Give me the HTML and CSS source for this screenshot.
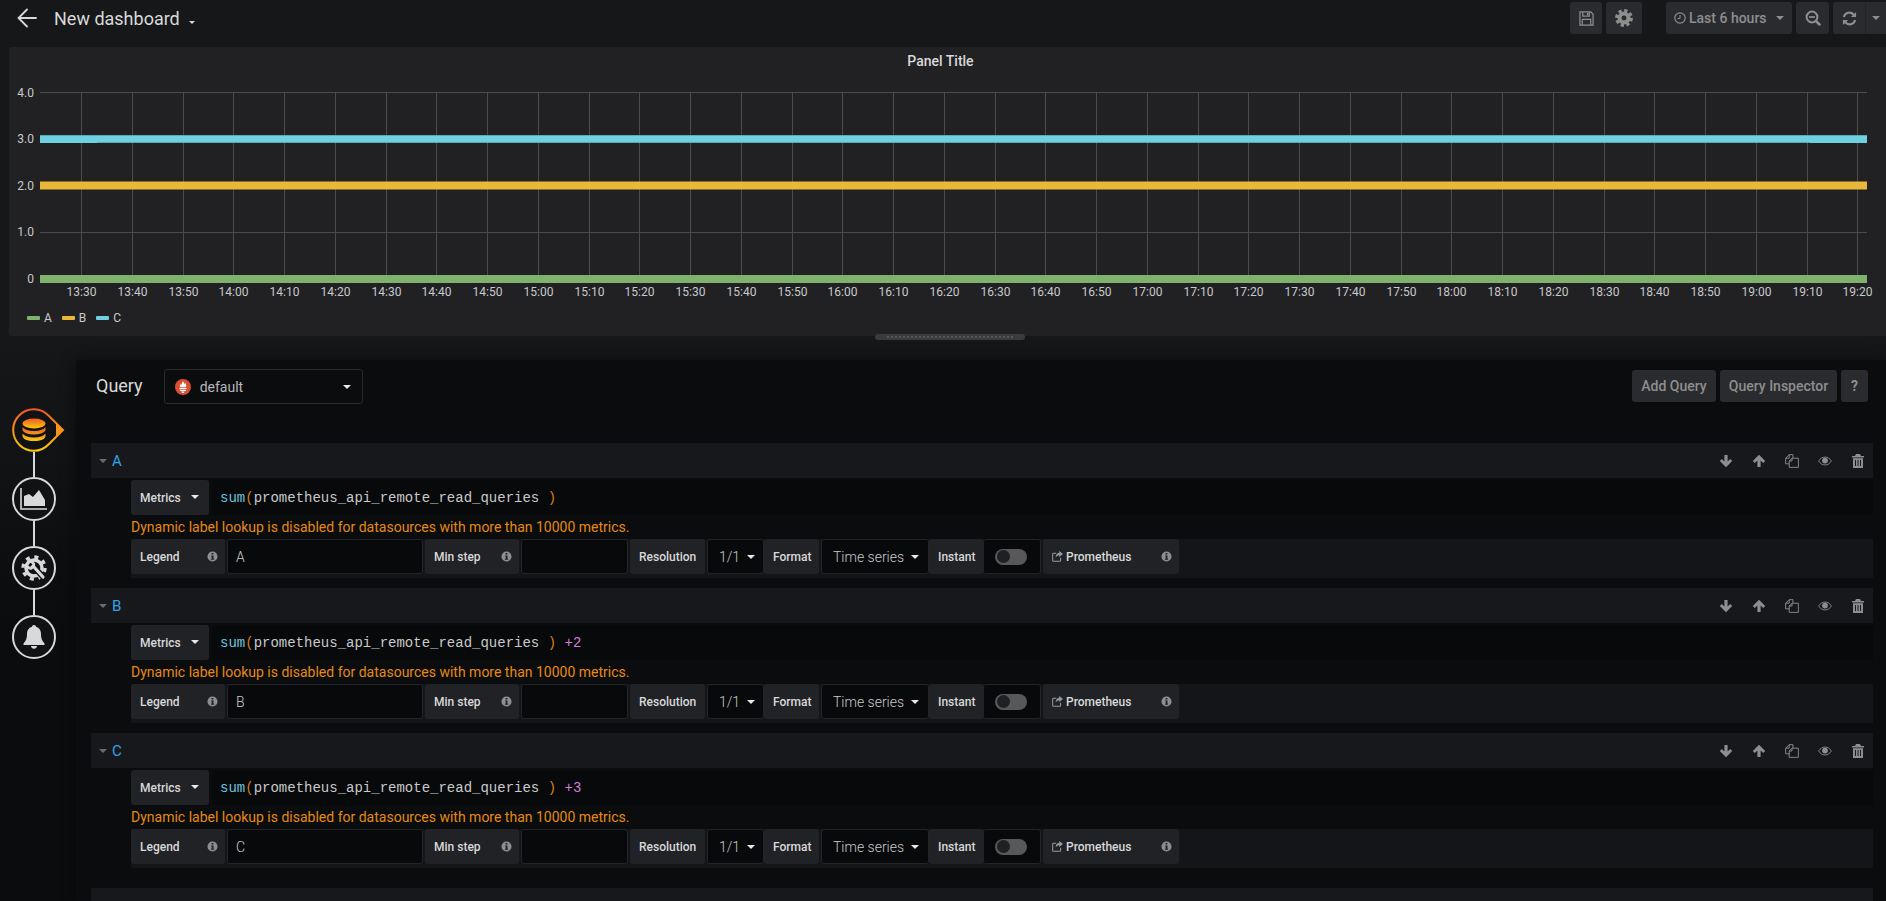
FILE: index.html
```html
<!DOCTYPE html>
<html lang="en">
<head>
<meta charset="utf-8">
<title>New dashboard</title>
<link rel="stylesheet" href="styles.css">
</head>
<body>
<svg class="defs" width="0" height="0" aria-hidden="true">
  <defs>
    <linearGradient id="orange" x1="0" y1="0" x2="0" y2="1"><stop offset="0" stop-color="#f05a28"/><stop offset="1" stop-color="#fbca0a"/></linearGradient>
    <symbol id="i-info" viewBox="0 0 12 12"><path fill="currentColor" fill-rule="evenodd" d="M6 .5a5.500 5.500 0 1 0 0 11 5.500 5.500 0 0 0 0-11zM5 2.200h2v1.700H5zM4.400 4.800h2.700v3.700h.7v1H4.300v-1h.8V5.800h-.7z"/></symbol>
    <symbol id="i-down" viewBox="0 0 14 14"><path fill="currentColor" d="M7 13.200.8 7l2-2 2.600 2.600V1h3.200v6.600L11.200 5l2 2z"/></symbol>
    <symbol id="i-up" viewBox="0 0 14 14"><path fill="currentColor" d="M7 .8 13.200 7l-2 2-2.600-2.600V13H5.400V6.400L2.800 9l-2-2z"/></symbol>
    <symbol id="i-copy" viewBox="0 0 15 15"><path fill="none" stroke="currentColor" d="M4.500 10.500H.7V4.500L4.500.7h4v3.500M8.500 4.500h-1l-3 3v6.800h9.800V4.500zM4.500.7v3.800H.7M7.500 4.500v3h-3"/></symbol>
    <symbol id="i-eye" viewBox="0 0 16 12"><path fill="none" stroke="currentColor" d="M.7 6C2.500 3 5 1.500 8 1.500S13.500 3 15.300 6C13.500 9 11 10.500 8 10.500S2.500 9 .7 6z"/><circle cx="8" cy="5.500" r="3.300" fill="currentColor"/></symbol>
    <symbol id="i-trash" viewBox="0 0 12 14"><path fill="currentColor" fill-rule="evenodd" d="M4 0h4l1 2h3v1.500H0V2h3zM1 4.300h10V14H1zM3 6v6h1V6zM5.500 6v6h1V6zM8 6v6h1V6z"/></symbol>
    <symbol id="i-link" viewBox="0 0 13 13"><path fill="none" stroke="currentColor" stroke-width="1.200" d="M5 2.600H1.800a1 1 0 0 0-1 1v7.600a1 1 0 0 0 1 1h7.400a1 1 0 0 0 1-1V8"/><path fill="currentColor" d="M8.500 0 13 3.500 8.500 7V5C6.500 5 5 6 4.500 8 4 4.500 6 2.500 8.500 2.200z"/></symbol>
    <symbol id="i-save" viewBox="0 0 16 16"><path fill="none" stroke="currentColor" stroke-width="1.300" d="M1 1h11.500L15 3.500V15H1z"/><path fill="none" stroke="currentColor" stroke-width="1.300" d="M4 1v4.500h7V1M3.500 15V9h9v6"/><rect x="8.500" y="2" width="1.500" height="2.500" fill="currentColor"/></symbol>
    <symbol id="i-cog" viewBox="0 0 20 20"><circle cx="10" cy="10" r="5" fill="none" stroke="currentColor" stroke-width="4.500"/><circle cx="10" cy="10" r="8.200" fill="none" stroke="currentColor" stroke-width="3.400" stroke-dasharray="3.600 2.840"/></symbol>
    <symbol id="i-clock" viewBox="0 0 12 12"><circle cx="6" cy="6" r="5.200" fill="none" stroke="currentColor" stroke-width="1.200"/><path fill="none" stroke="currentColor" d="M6 3v3.500H3.500"/></symbol>
    <symbol id="i-zoom" viewBox="0 0 16 16"><circle cx="7" cy="7" r="5.400" fill="none" stroke="currentColor" stroke-width="2"/><path stroke="currentColor" stroke-width="2.500" stroke-linecap="round" d="m11 11 3.500 3.500"/><path stroke="currentColor" stroke-width="1.700" d="M4 7h6"/></symbol>
    <symbol id="i-refresh" viewBox="0 0 16 16"><path fill="none" stroke="currentColor" stroke-width="2.200" d="M2 6.500A6 6 0 0 1 12.500 4M14 9.500A6 6 0 0 1 3.500 12"/><path fill="currentColor" d="M15 1v5.500H9.500zM1 15V9.500h5.500z"/></symbol>
    <symbol id="i-prom" viewBox="0 0 16 16"><circle cx="8" cy="8" r="8" fill="#da4e31"/><path fill="#fff" d="M8 2c.5 1.500 1.300 1.800 1 3 .7-.2.900-.7 1-1.200.8 1 1.400 2.200 1.200 3.700l-.2.800H5c-.5-1.500.3-3 1-3.800 0 .7.300 1.200.8 1.400C6.500 4.500 7.500 3.500 8 2zM4.500 9h7v1.200h-7zM5 11h6v1H5zM6.500 12.500h3a1.500 1.500 0 0 1-3 0z"/></symbol>
    <symbol id="i-back" viewBox="0 0 20 20"><path fill="none" stroke="currentColor" stroke-width="1.800" stroke-linecap="round" d="M19 10H2M10 1.500 1.500 10l8.500 8.500"/></symbol>
  </defs>
</svg>

<header class="topbar">
  <svg class="back"><use href="#i-back"/></svg>
  <h1 class="dash-title">New dashboard</h1>
  <span class="caret caret-title"></span>
  <div class="top-actions">
    <button class="tbtn tbtn-save"><svg class="ti ti-save"><use href="#i-save"/></svg></button>
    <button class="tbtn tbtn-cog"><svg class="ti ti-cog"><use href="#i-cog"/></svg></button>
    <button class="tbtn tbtn-time"><svg class="ti ti-clock"><use href="#i-clock"/></svg><span>Last 6 hours</span><span class="caret caret-grey"></span></button>
    <button class="tbtn tbtn-zoom"><svg class="ti ti-zoom"><use href="#i-zoom"/></svg></button>
    <div class="refresh-group">
      <button class="tbtn tbtn-refresh"><svg class="ti ti-refresh"><use href="#i-refresh"/></svg></button>
      <button class="tbtn tbtn-more"><span class="caret caret-grey"></span></button>
    </div>
  </div>
</header>

<section class="panel">
  <div class="panel-title">Panel Title</div>
  <svg class="chart" viewBox="9 70 1877 236" width="1877" height="236">
    <g class="grid">
      <path d="M40 92.500H1867M40 139.500H1867M40 186.500H1867M40 232.500H1867"/>
      <path d="M81.500 92V279M132.500 92V279M183.500 92V279M233.500 92V279M284.500 92V279M335.500 92V279M386.500 92V279M436.500 92V279M487.500 92V279M538.500 92V279M589.500 92V279M639.500 92V279M690.500 92V279M741.500 92V279M792.500 92V279M842.500 92V279M893.500 92V279M944.500 92V279M995.500 92V279M1045.500 92V279M1096.500 92V279M1147.500 92V279M1198.500 92V279M1248.500 92V279M1299.500 92V279M1350.500 92V279M1401.500 92V279M1451.500 92V279M1502.500 92V279M1553.500 92V279M1604.500 92V279M1654.500 92V279M1705.500 92V279M1756.500 92V279M1807.500 92V279M1857.500 92V279"/>
    </g>
    <rect class="s-c" x="40" y="135" width="1827" height="8"/>
    <path class="s-c-edge" d="M40 135.500H1867M97 142.500H1810"/>
    <rect class="s-b" x="40" y="181.500" width="1827" height="8"/>
    <rect class="s-a" x="40" y="275" width="1827" height="8"/>
    <g class="ylab">
      <text x="34" y="96.500">4.0</text><text x="34" y="142.500">3.0</text><text x="34" y="189.500">2.0</text><text x="34" y="236">1.0</text><text x="34" y="283">0</text>
    </g>
    <g class="xlab">
      <text x="81.500" y="296">13:30</text><text x="132.500" y="296">13:40</text><text x="183.500" y="296">13:50</text><text x="233.500" y="296">14:00</text><text x="284.500" y="296">14:10</text><text x="335.500" y="296">14:20</text><text x="386.500" y="296">14:30</text><text x="436.500" y="296">14:40</text><text x="487.500" y="296">14:50</text><text x="538.500" y="296">15:00</text><text x="589.500" y="296">15:10</text><text x="639.500" y="296">15:20</text><text x="690.500" y="296">15:30</text><text x="741.500" y="296">15:40</text><text x="792.500" y="296">15:50</text><text x="842.500" y="296">16:00</text><text x="893.500" y="296">16:10</text><text x="944.500" y="296">16:20</text><text x="995.500" y="296">16:30</text><text x="1045.500" y="296">16:40</text><text x="1096.500" y="296">16:50</text><text x="1147.500" y="296">17:00</text><text x="1198.500" y="296">17:10</text><text x="1248.500" y="296">17:20</text><text x="1299.500" y="296">17:30</text><text x="1350.500" y="296">17:40</text><text x="1401.500" y="296">17:50</text><text x="1451.500" y="296">18:00</text><text x="1502.500" y="296">18:10</text><text x="1553.500" y="296">18:20</text><text x="1604.500" y="296">18:30</text><text x="1654.500" y="296">18:40</text><text x="1705.500" y="296">18:50</text><text x="1756.500" y="296">19:00</text><text x="1807.500" y="296">19:10</text><text x="1857.500" y="296">19:20</text>
    </g>
  </svg>
  <div class="legend">
    <span class="leg"><i class="sw sw-a"></i>A</span>
    <span class="leg"><i class="sw sw-b"></i>B</span>
    <span class="leg"><i class="sw sw-c"></i>C</span>
  </div>
  <div class="handle"></div>
</section>

<div class="lower">
  <nav class="steps">
    <div class="step step-active">
      <svg class="step-svg" viewBox="0 0 54 44" width="54" height="44">
        <path d="M22 1.200C28 1.200 33 3.800 37 8L51 22 37 36C33 40.200 28 42.800 22 42.800A20.800 20.800 0 0 1 22 1.200Z" fill="#111214" stroke="url(#orange)" stroke-width="2"/>
        <path d="M44 15 51.500 22 44 29.500z" fill="#f7941d"/>
        <g fill="url(#orange)"><ellipse cx="22" cy="15.500" rx="11.500" ry="5"/><path d="M10.500 19c2 2.500 6 4 11.500 4s9.500-1.500 11.500-4v3.500c-2 2.500-6 4-11.500 4s-9.500-1.500-11.500-4zM10.500 25.500c2 2.500 6 4 11.500 4s9.500-1.500 11.500-4v2.500c0 3-5 5-11.500 5s-11.500-2-11.500-5z"/></g>
      </svg>
    </div>
    <i class="link"></i>
    <div class="step">
      <svg viewBox="0 0 28 24" width="28" height="24"><path fill="none" stroke="#d8d9da" stroke-width="1.600" d="M1 1v21h26"/><path fill="#d8d9da" d="M4 19V9l5-2 4 3 6-7 6 10v6z"/></svg>
    </div>
    <i class="link"></i>
    <div class="step">
      <svg viewBox="0 0 26 26" width="26" height="26"><circle cx="13" cy="13" r="8" fill="none" stroke="#d8d9da" stroke-width="3.500"/><circle cx="13" cy="13" r="11" fill="none" stroke="#d8d9da" stroke-width="3.400" stroke-dasharray="4 4.640"/><path fill="none" stroke="#111214" stroke-width="6" d="m12 11 11 12"/><path fill="none" stroke="#d8d9da" stroke-width="3.200" stroke-linecap="round" d="m13 12 9 10"/><path fill="#d8d9da" d="M6 7c2-2 5-2 7 0 1.500 1.500 1.500 3.500.5 5L11 14.500C9 15 7 14.500 6 13c-1-1.500-1-3-.5-4.500L9 12l2.500-2.500L8 6z"/></svg>
    </div>
    <i class="link"></i>
    <div class="step">
      <svg viewBox="0 0 22 24" width="22" height="24"><path fill="#d8d9da" d="M11 0c1.200 0 2 .8 2 1.700 3.500 1 5 4 5 7.300 0 4 .8 6.500 3.500 9.500v1.500H.5v-1.500C3.200 15.500 4 13 4 9c0-3.300 1.500-6.300 5-7.300C9 .8 9.800 0 11 0zM8 21h6c0 1.500-1.300 2.700-3 2.700S8 22.500 8 21z"/></svg>
    </div>
  </nav>

  <main class="editor">
    <div class="editor-head">
      <h2 class="editor-title">Query</h2>
      <div class="ds-select"><svg class="ds-icon"><use href="#i-prom"/></svg><span class="ds-name">default</span><span class="caret caret-ds"></span></div>
      <div class="editor-actions">
        <button class="ebtn ebtn-add">Add Query</button>
        <button class="ebtn ebtn-insp">Query Inspector</button>
        <button class="ebtn ebtn-help">?</button>
      </div>
    </div>

    <div class="qrow">
      <div class="qhead">
        <span class="caret caret-row"></span><span class="qname">A</span>
        <div class="qtools"><svg class="qi"><use href="#i-down"/></svg><svg class="qi"><use href="#i-up"/></svg><svg class="qi"><use href="#i-copy"/></svg><svg class="qi"><use href="#i-eye"/></svg><svg class="qi"><use href="#i-trash"/></svg></div>
      </div>
      <div class="qbody">
        <div class="expr-line"><div class="metrics">Metrics<span class="caret caret-metrics"></span></div><div class="expr"><span class="fn">sum</span><span class="par">(</span>prometheus_api_remote_read_queries <span class="par">)</span></div></div>
        <div class="warn">Dynamic label lookup is disabled for datasources with more than 10000 metrics.</div>
        <div class="opts">
          <div class="lbl lbl-legend">Legend<svg class="info"><use href="#i-info"/></svg></div><div class="inp inp-legend">A</div>
          <div class="lbl lbl-step">Min step<svg class="info"><use href="#i-info"/></svg></div><div class="inp inp-step"></div>
          <div class="lbl lbl-res">Resolution</div><div class="inp inp-ratio">1/1<span class="caret caret-opt"></span></div>
          <div class="lbl lbl-fmt">Format</div><div class="inp inp-fmt">Time series<span class="caret caret-opt"></span></div>
          <div class="lbl lbl-inst">Instant</div><div class="inp inp-toggle"><span class="toggle"><span class="knob"></span></span></div>
          <div class="lbl lbl-prom"><svg class="plink"><use href="#i-link"/></svg>Prometheus<svg class="info"><use href="#i-info"/></svg></div>
        </div>
      </div>
    </div>

    <div class="qrow">
      <div class="qhead">
        <span class="caret caret-row"></span><span class="qname">B</span>
        <div class="qtools"><svg class="qi"><use href="#i-down"/></svg><svg class="qi"><use href="#i-up"/></svg><svg class="qi"><use href="#i-copy"/></svg><svg class="qi"><use href="#i-eye"/></svg><svg class="qi"><use href="#i-trash"/></svg></div>
      </div>
      <div class="qbody">
        <div class="expr-line"><div class="metrics">Metrics<span class="caret caret-metrics"></span></div><div class="expr"><span class="fn">sum</span><span class="par">(</span>prometheus_api_remote_read_queries <span class="par">)</span> <span class="op">+2</span></div></div>
        <div class="warn">Dynamic label lookup is disabled for datasources with more than 10000 metrics.</div>
        <div class="opts">
          <div class="lbl lbl-legend">Legend<svg class="info"><use href="#i-info"/></svg></div><div class="inp inp-legend">B</div>
          <div class="lbl lbl-step">Min step<svg class="info"><use href="#i-info"/></svg></div><div class="inp inp-step"></div>
          <div class="lbl lbl-res">Resolution</div><div class="inp inp-ratio">1/1<span class="caret caret-opt"></span></div>
          <div class="lbl lbl-fmt">Format</div><div class="inp inp-fmt">Time series<span class="caret caret-opt"></span></div>
          <div class="lbl lbl-inst">Instant</div><div class="inp inp-toggle"><span class="toggle"><span class="knob"></span></span></div>
          <div class="lbl lbl-prom"><svg class="plink"><use href="#i-link"/></svg>Prometheus<svg class="info"><use href="#i-info"/></svg></div>
        </div>
      </div>
    </div>

    <div class="qrow">
      <div class="qhead">
        <span class="caret caret-row"></span><span class="qname">C</span>
        <div class="qtools"><svg class="qi"><use href="#i-down"/></svg><svg class="qi"><use href="#i-up"/></svg><svg class="qi"><use href="#i-copy"/></svg><svg class="qi"><use href="#i-eye"/></svg><svg class="qi"><use href="#i-trash"/></svg></div>
      </div>
      <div class="qbody">
        <div class="expr-line"><div class="metrics">Metrics<span class="caret caret-metrics"></span></div><div class="expr"><span class="fn">sum</span><span class="par">(</span>prometheus_api_remote_read_queries <span class="par">)</span> <span class="op">+3</span></div></div>
        <div class="warn">Dynamic label lookup is disabled for datasources with more than 10000 metrics.</div>
        <div class="opts">
          <div class="lbl lbl-legend">Legend<svg class="info"><use href="#i-info"/></svg></div><div class="inp inp-legend">C</div>
          <div class="lbl lbl-step">Min step<svg class="info"><use href="#i-info"/></svg></div><div class="inp inp-step"></div>
          <div class="lbl lbl-res">Resolution</div><div class="inp inp-ratio">1/1<span class="caret caret-opt"></span></div>
          <div class="lbl lbl-fmt">Format</div><div class="inp inp-fmt">Time series<span class="caret caret-opt"></span></div>
          <div class="lbl lbl-inst">Instant</div><div class="inp inp-toggle"><span class="toggle"><span class="knob"></span></span></div>
          <div class="lbl lbl-prom"><svg class="plink"><use href="#i-link"/></svg>Prometheus<svg class="info"><use href="#i-info"/></svg></div>
        </div>
      </div>
    </div>

    <div class="qhead qhead-last"></div>
  </main>
</div>
</body>
</html>
```
FILE: styles.css
```css
* { box-sizing: border-box; }
html, body { margin: 0; height: 901px; overflow: hidden; }
body {
  width: 1886px;
  background: linear-gradient(180deg, #161719 0, #161719 340px, #0b0c0e 620px);
  color: #d8d9da;
  font-family: Roboto, "Liberation Sans", sans-serif;
  font-size: 14px;
}
.defs { position: absolute; }
button { font-family: inherit; border: 0; padding: 0; margin: 0; }

.caret { display: block; width: 0; height: 0; border-style: solid; border-color: #d8d9da transparent transparent; }

/* top bar */
.topbar { height: 47px; display: flex; align-items: flex-start; padding-left: 17px; }
.back { width: 20px; height: 20px; margin-top: 8px; color: #d8d9da; }
.dash-title { margin: 5px 0 0 17px; font-size: 18px; font-weight: 400; line-height: 28px; color: #d8d9da; }
.caret-title { margin: 21px 0 0 9px; border-width: 3px 3px 0; }
.top-actions { margin-left: auto; display: flex; gap: 4px; padding-top: 2px; align-items: flex-start; }
.tbtn { height: 32px; display: flex; align-items: center; justify-content: center; background: #2a2b2e; border-radius: 3px; color: #8e8e8e; font-size: 14px; font-weight: 500; }
.tbtn-save { width: 32px; }
.tbtn-cog { width: 36px; margin-right: 20px; }
.tbtn-time { width: 126px; justify-content: flex-start; padding-left: 8px; }
.tbtn-zoom { width: 33px; }
.refresh-group { display: flex; width: 53px; }
.tbtn-refresh { width: 32px; border-radius: 3px 0 0 3px; }
.tbtn-more { width: 21px; border-radius: 0; border-left: 1px solid #232427; }
.ti { display: block; }
.ti-save { width: 15px; height: 15px; }
.ti-cog { width: 18px; height: 18px; }
.ti-clock { width: 12px; height: 12px; margin-right: 3px; }
.ti-zoom { width: 16px; height: 16px; }
.ti-refresh { width: 15px; height: 15px; }
.caret-grey { border-width: 4px 4px 0; border-top-color: #8e8e8e; }
.tbtn-time .caret-grey { margin-left: 9px; }

/* graph panel */
.panel { position: relative; height: 289px; margin-left: 9px; width: 1877px; background: #212124; border-radius: 3px 0 0 3px; }
.panel-title { height: 23px; padding: 6px 14px 0 0; line-height: 17px; font-size: 14px; font-weight: 500; text-align: center; color: #d8d9da; }
.chart { display: block; }
.grid path { stroke: #4c4c4e; stroke-width: 1; fill: none; }
.s-c { fill: #6ed0e0; }
.s-c-edge { stroke: #5aa9b8; stroke-width: 1; fill: none; }
.s-b { fill: #eab839; }
.s-a { fill: #7eb26d; }
.ylab text { text-anchor: end; fill: #c8c9ca; font: 400 12px Roboto, sans-serif; }
.xlab text { text-anchor: middle; fill: #c8c9ca; font: 400 12px Roboto, sans-serif; }
.legend { height: 30px; display: flex; gap: 10px; padding: 4px 0 0 18px; align-items: flex-start; }
.leg { display: flex; align-items: center; font-size: 12px; line-height: 16px; color: #c8c9ca; }
.sw { display: block; width: 13px; height: 4px; margin-right: 4px; border-radius: 1px; }
.sw-a { background: #7eb26d; }
.sw-b { background: #eab839; }
.sw-c { background: #6ed0e0; }
.handle {
  position: absolute; left: 866px; bottom: -4px; width: 150px; height: 6px; border-radius: 3px;
  background-image: repeating-linear-gradient(90deg, #3b3b3f 0, #3b3b3f 2px, #58585c 2px, #58585c 4px);
  background-size: 130px 2px; background-position: center; background-repeat: no-repeat;
  background-color: #3b3b3f;
}

/* lower area */
.lower { display: flex; height: 565px; padding-top: 24px; }
.steps { width: 76px; padding: 48px 0 0 12px; flex: none; display: flex; flex-direction: column; align-items: flex-start; }
.step { width: 44px; height: 44px; border-radius: 50%; border: 2px solid #d8d9da; display: flex; align-items: center; justify-content: center; background: #111214; flex: none; }
.step-active { border: 0; background: none; width: 54px; display: block; border-radius: 0; }
.step-svg { display: block; }
.link { display: block; width: 2px; height: 25px; margin-left: 21px; background: #d8d9da; flex: none; }

.editor { flex: 1; background: #0b0c0e; border-radius: 4px 0 0 0; padding: 0 13px 0 15px; box-shadow: 0 0 16px rgba(0,0,0,.45); min-width: 0; }
.editor-head { height: 83px; display: flex; align-items: flex-start; }
.editor-title { margin: 8px 0 0 5px; font-size: 18px; font-weight: 400; line-height: 36px; color: #d8d9da; }
.ds-select { margin: 9px 0 0 21px; width: 199px; height: 35px; display: flex; align-items: center; padding: 0 6px 0 10px; background: #0b0c0e; border: 1px solid #2a2a2d; border-radius: 3px; }
.ds-icon { width: 16px; height: 16px; }
.ds-name { margin-left: 9px; color: #b7b8bb; font-size: 14px; }
.caret-ds { margin-left: auto; margin-right: 5px; border-width: 4px 4px 0; border-top-color: #e8e8e8; }
.editor-actions { margin-left: auto; display: flex; gap: 4px; padding: 10px 5px 0 0; }
.ebtn { height: 32px; background: #2a2b2e; border-radius: 3px; color: #8e8e8e; font-size: 14px; font-weight: 500; }
.ebtn-add { width: 84px; }
.ebtn-insp { width: 117px; }
.ebtn-help { width: 27px; font-weight: 700; }

.qrow { height: 145px; }
.qhead { height: 35px; background: #17181b; display: flex; align-items: center; padding-left: 8px; }
.caret-row { border-width: 4px 4px 0; border-top-color: #6b6b6e; }
.qname { margin-left: 5px; color: #33a2e5; font-weight: 400; font-size: 15px; }
.qtools { margin-left: auto; display: flex; gap: 19px; align-items: center; padding-right: 8px; color: #8e8e8e; }
.qi { width: 14px; height: 14px; display: block; }
.qbody { margin: 2px 0 0 40px; height: 98px; background: #141518; }
.expr-line { display: flex; gap: 3px; height: 35px; background: #0b0c0e; }
.metrics { width: 78px; height: 35px; background: #202226; border-radius: 3px; display: flex; align-items: center; padding-left: 9px; font-size: 12px; font-weight: 500; color: #d8d9da; }
.caret-metrics { margin: -2px 0 0 10px; border-width: 4px 4px 0; border-top-color: #e8e8e8; }
.expr { flex: 1; height: 35px; padding-left: 8px; line-height: 36px; background: #08090b; font-family: "Liberation Mono", monospace; font-size: 14px; color: #c8c9ca; white-space: pre; }
.fn { color: #6ec4de; }
.par { color: #d27b1e; }
.op { color: #d77ed6; }
.warn { height: 24px; line-height: 24px; font-size: 14px; color: #e58a14; background: #0b0c0e; white-space: nowrap; }
.opts { display: flex; height: 39px; align-items: flex-start; }
.lbl { height: 35px; background: #202226; border-radius: 3px; display: flex; align-items: center; padding-left: 9px; font-size: 12px; font-weight: 500; color: #d8d9da; flex: none; white-space: nowrap; }
.info { width: 11px; height: 11px; color: #8e8e8e; margin-left: auto; margin-right: 7px; display: block; }
.inp { height: 35px; background: #08090b; border: 1px solid #232427; border-radius: 3px; flex: none; display: flex; align-items: center; padding-left: 8px; font-size: 14px; font-weight: 300; color: #c8c9ca; white-space: nowrap; }
.lbl-legend { width: 94px; margin-right: 2px; }
.inp-legend { width: 196px; margin-right: 2px; }
.lbl-step { width: 94px; margin-right: 2px; }
.inp-step { width: 107px; margin-right: 2px; }
.lbl-res { width: 75px; margin-right: 2px; }
.inp-ratio { width: 57px; padding-left: 11px; }
.lbl-fmt { width: 55px; margin-right: 2px; }
.inp-fmt { width: 108px; padding-left: 11px; }
.lbl-inst { width: 55px; }
.inp-toggle { width: 57px; margin-right: 2px; padding-left: 11px; border-left: 0; }
.lbl-prom { width: 136px; }
.plink { width: 11px; height: 11px; margin-right: 3px; color: #9a9a9c; }
.caret-opt { margin-left: 7px; border-width: 4px 4px 0; border-top-color: #e8e8e8; }
.toggle { display: block; width: 32px; height: 16px; border-radius: 8px; background: #58585a; padding: 1.5px; }
.knob { display: block; width: 13px; height: 13px; border-radius: 50%; background: #1f2023; }
.qhead-last { margin-top: 10px; }
```
